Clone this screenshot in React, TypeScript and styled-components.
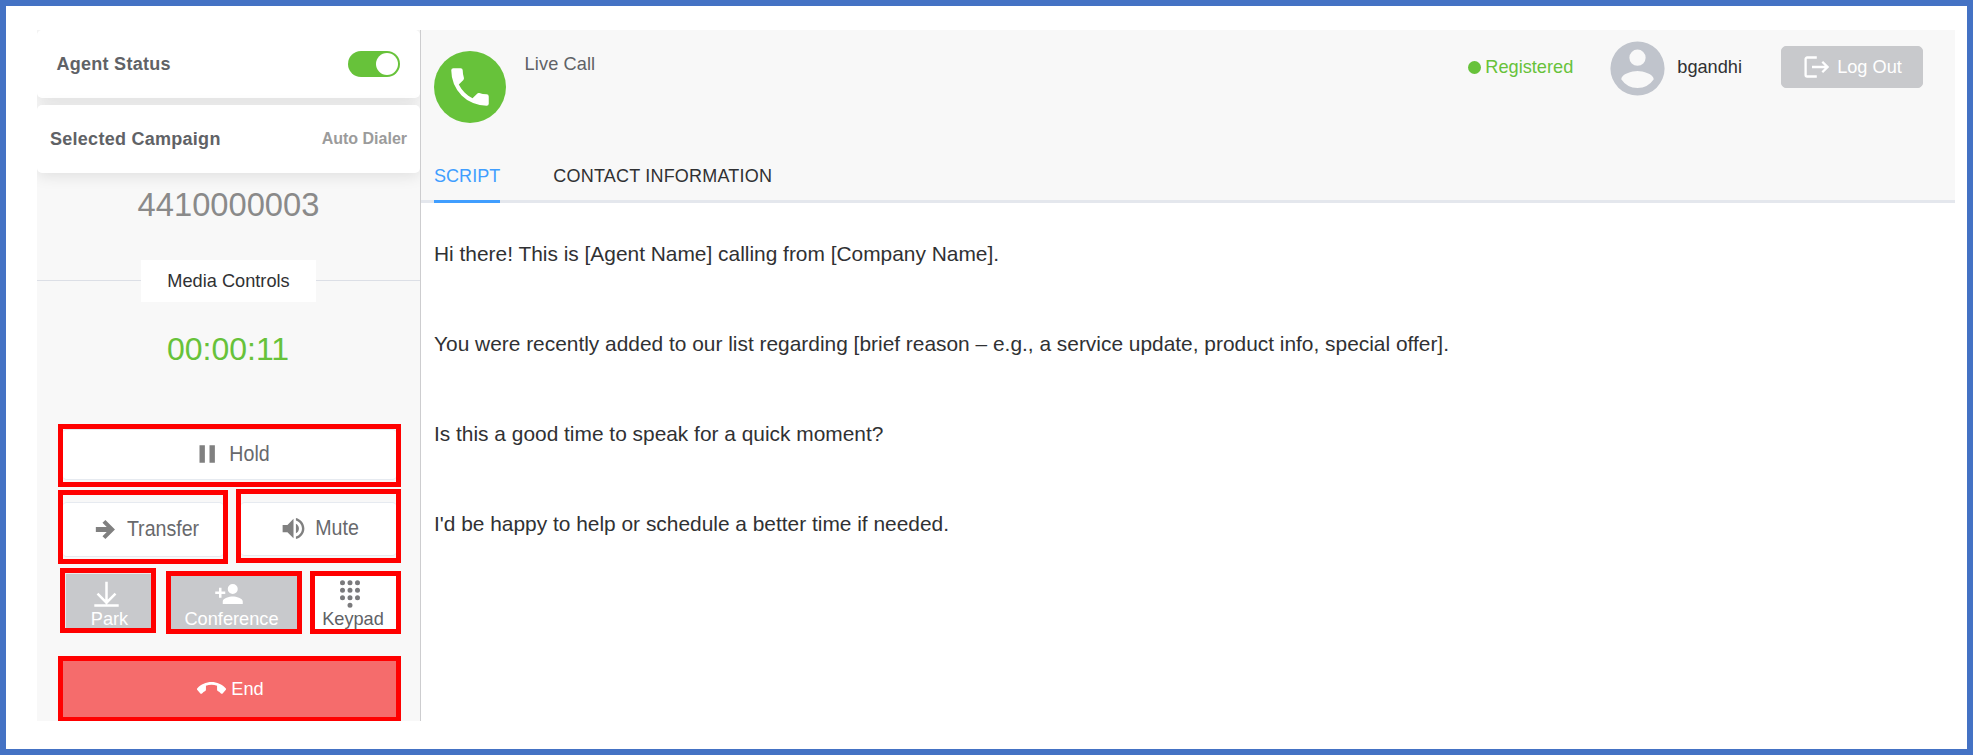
import React from "react";
import styled, { createGlobalStyle } from "styled-components";

const GlobalStyle = createGlobalStyle`
  * { box-sizing: border-box; }
  body { margin: 0; background: #fff; font-family: "Liberation Sans", Arial, Helvetica, sans-serif; font-size: 18.2px; color: #303133; }
  p { margin: 0; }
  button { font: inherit; padding: 0; margin: 0; }
  svg { display: block; flex: none; fill: currentColor; }
`;

const Frame = styled.div`
  width: 1973px;
  height: 755px;
  border: 6px solid #4472c4;
  padding: 24px 12px 28px 31px;
  display: flex;
  overflow: hidden;
`;

const Sidebar = styled.aside`
  width: 384px;
  height: 691px;
  background: #f8f8f8;
  border-right: 1px solid #cdcdcf;
  display: flex;
  flex-direction: column;
  flex: none;
  overflow: hidden;
`;

const Card = styled.section<{ $inset: string }>`
  height: 68px;
  margin-bottom: 7px;
  padding: ${(p) => p.$inset};
  display: flex;
  align-items: center;
  justify-content: space-between;
  background: #fff;
  border-radius: 5px;
  box-shadow: 0 3px 15px rgba(0, 0, 0, 0.1);
  flex: none;
`;

const CardTitle = styled.h2`
  margin: 0;
  font-size: 18px;
  line-height: 22px;
  letter-spacing: 0.27px;
  color: #606266;
`;

const Campaign = styled.span`
  font-size: 16px;
  font-weight: bold;
  color: #9b9b9b;
`;

const Toggle = styled.button`
  width: 52px;
  height: 26px;
  padding: 2px;
  border: 0;
  border-radius: 13px;
  background: #67c23a;
  display: flex;
  justify-content: flex-end;
  align-items: center;
`;

const Knob = styled.span`
  width: 22px;
  height: 22px;
  border-radius: 50%;
  background: #fff;
`;

const PhoneNumber = styled.div`
  margin-top: 6px;
  height: 38px;
  font-size: 32.7px;
  line-height: 38px;
  text-align: center;
  color: #8a8a8a;
`;

const Divider = styled.div`
  margin-top: 36px;
  height: 42px;
  display: flex;
  align-items: center;
  &::before, &::after { content: ""; height: 1px; flex: 1; margin-bottom: 1px; background: #dcdfe6; }
`;

const DividerLabel = styled.span`
  width: 175px;
  line-height: 42px;
  text-align: center;
  background: #fff;
`;

const Timer = styled.div`
  margin-top: 28px;
  height: 38px;
  font-size: 32px;
  line-height: 38px;
  padding-right: 1px;
  text-align: center;
  color: #67c23a;
`;

const Controls = styled.div`
  margin: 56px 19px 0 21px;
  display: flex;
  flex-direction: column;
`;

const ControlRow = styled.div<{ $top?: number; $left?: number }>`
  display: flex;
  align-items: flex-start;
  margin: ${(p) => p.$top ?? 0}px 0 0 ${(p) => p.$left ?? 0}px;
`;

const Control = styled.button<{ $w: number; $h: number; $drop?: number; $lead?: number; $pad?: string }>`
  width: ${(p) => p.$w}px;
  height: ${(p) => p.$h}px;
  margin: ${(p) => p.$drop ?? 0}px 0 0 ${(p) => p.$lead ?? 0}px;
  padding: ${(p) => p.$pad ?? "0"};
  border: 5px solid #f00;
  background: #f8f8f8;
  display: flex;
  flex: none;
`;

const Face = styled.span<{ $shift: number }>`
  flex: 1;
  align-self: stretch;
  display: flex;
  align-items: center;
  justify-content: center;
  gap: 7px;
  padding: 0 0 1px ${(p) => p.$shift}px;
  background: #fff;
  border: solid #e6eaf0;
  border-width: 1px 0;
  border-radius: 4px;
  font-size: 19.6px;
  color: #808080;
`;

const TallLabel = styled.span`
  color: #68696c;
  line-height: 24px;
  margin-bottom: 3px;
  transform: scaleY(1.1);
`;

const Tile = styled.span<{ $tone: "muted" | "plain"; $top: number; $edge?: boolean }>`
  flex: 1;
  align-self: stretch;
  display: flex;
  flex-direction: column;
  align-items: center;
  padding-top: ${(p) => p.$top}px;
  background: ${(p) => (p.$tone === "muted" ? "#c8c9cc" : "#fff")};
  color: ${(p) => (p.$tone === "muted" ? "#fff" : "#7a7a7c")};
  box-shadow: ${(p) => (p.$edge ? "inset 1px 1px #e9eaec" : "none")};
`;

const TileGlyph = styled.span<{ $right: number }>`
  padding-right: ${(p) => p.$right}px;
`;

const TileLabel = styled.span<{ $dark?: boolean; $left?: number; $right?: number }>`
  padding: 0 ${(p) => p.$right ?? 0}px 0 ${(p) => p.$left ?? 0}px;
  line-height: 20px;
  color: ${(p) => (p.$dark ? "#606266" : "#fff")};
`;

const EndFace = styled.span`
  flex: 1;
  align-self: stretch;
  display: flex;
  align-items: center;
  justify-content: center;
  gap: 5px;
  padding: 1px 0 0 2px;
  background: #f56c6c;
  color: #fff;
  svg { margin-bottom: 3px; }
`;

const Main = styled.main`
  flex: 1;
  min-width: 0;
`;

const Header = styled.header`
  height: 115px;
  padding: 0 32px 0 13px;
  background: #f8f8f8;
  display: flex;
  align-items: flex-start;
`;

const CallBadge = styled.div`
  width: 72px;
  height: 72px;
  margin-top: 21px;
  border-radius: 50%;
  background: #67c23a;
  color: #fff;
  display: flex;
  align-items: center;
  justify-content: center;
`;

const CallState = styled.span`
  margin: 23px auto 0 18.6px;
  line-height: 22px;
  letter-spacing: 0.1px;
  color: #606266;
`;

const Registered = styled.span`
  margin-top: 26px;
  display: flex;
  align-items: center;
  gap: 4px;
  line-height: 22px;
  color: #67c23a;
  &::before { content: ""; width: 13px; height: 13px; border-radius: 50%; background: currentColor; }
`;

const User = styled.span`
  margin: 6px 0 0 32px;
  display: flex;
  line-height: 62px;
  gap: 7px;
  svg { color: #c0c4cc; }
`;

const LogOut = styled.button`
  width: 142px;
  height: 42px;
  margin: 16px 0 0 39px;
  border: 1px solid #c8c9cc;
  border-radius: 5px;
  background: #c8c9cc;
  color: #fff;
  display: flex;
  align-items: center;
  justify-content: center;
  gap: 8px;
  padding-left: 2px;
`;

const Tabs = styled.nav`
  height: 58px;
  padding-left: 13px;
  display: flex;
  gap: 53px;
  background: #f8f8f8;
  box-shadow: inset 0 -3px #e4e7ed;
`;

const Tab = styled.a<{ $active?: boolean }>`
  font-size: 18px;
  line-height: 63px;
  letter-spacing: ${(p) => (p.$active ? 0.05 : 0.2)}px;
  color: ${(p) => (p.$active ? "#409eff" : "#303133")};
  box-shadow: ${(p) => (p.$active ? "inset 0 -3px #409eff" : "none")};
`;

const Script = styled.article`
  padding: 39px 0 0 13px;
  font-size: 20.9px;
  line-height: 24px;
  display: flex;
  flex-direction: column;
  gap: 66px;
`;

const Icon = ({ d, size }: { d: string; size: number }) => (
  <svg width={size} height={size} viewBox="0 0 24 24"><path d={d} /></svg>
);

const icons = {
  pause: "M14 19h4.3V5H14zM6 19h4.3V5H6z",
  arrow: "M4 10v4h9l-3.5 3.5 2.42 2.42L19.84 12l-7.92-7.92L9.5 6.5 13 10z",
  volume: "M14 3.23v2.06c2.89.86 5 3.54 5 6.71s-2.11 5.84-5 6.7v2.07c4-.91 7-4.49 7-8.77s-3-7.86-7-8.77M16.5 12c0-1.77-1-3.29-2.5-4.03V16c1.5-.71 2.5-2.24 2.5-4M3 9v6h4l5 5V4L7 9z",
  userPlus: "M15 14c-2.67 0-8 1.33-8 4v2h16v-2c0-2.67-5.33-4-8-4M6 10V7H4v3H1v2h3v3h2v-3h3v-2m6 2a4 4 0 1 0 0-8 4 4 0 0 0 0 8z",
  dialpad: "M12 19a2 2 0 1 0 0 4 2 2 0 0 0 0-4M6 1a2 2 0 1 0 0 4 2 2 0 0 0 0-4m0 6a2 2 0 1 0 0 4 2 2 0 0 0 0-4m0 6a2 2 0 1 0 0 4 2 2 0 0 0 0-4m12-8a2 2 0 1 0 0-4 2 2 0 0 0 0 4m-6 8a2 2 0 1 0 0 4 2 2 0 0 0 0-4m6 0a2 2 0 1 0 0 4 2 2 0 0 0 0-4m0-6a2 2 0 1 0 0 4 2 2 0 0 0 0-4m-6 0a2 2 0 1 0 0 4 2 2 0 0 0 0-4m0-6a2 2 0 1 0 0 4 2 2 0 0 0 0-4z",
  phone: "M6.62 10.79c1.44 2.83 3.76 5.15 6.59 6.59l2.2-2.2c.28-.28.67-.36 1.02-.25 1.12.37 2.32.57 3.57.57a1 1 0 0 1 1 1V20a1 1 0 0 1-1 1A17 17 0 0 1 3 4a1 1 0 0 1 1-1h3.5a1 1 0 0 1 1 1c0 1.25.2 2.45.57 3.57.11.35.03.74-.25 1.02z",
};

export default function App() {
  return (
    <>
      <GlobalStyle />
      <Frame>
        <Sidebar>
          <Card $inset="0 20px 0 19.5px">
            <CardTitle>Agent Status</CardTitle>
            <Toggle aria-label="Agent status"><Knob /></Toggle>
          </Card>
          <Card $inset="0 13px">
            <CardTitle>Selected Campaign</CardTitle>
            <Campaign>Auto Dialer</Campaign>
          </Card>
          <PhoneNumber>4410000003</PhoneNumber>
          <Divider><DividerLabel>Media Controls</DividerLabel></Divider>
          <Timer>00:00:11</Timer>
          <Controls>
            <ControlRow>
              <Control $w={343} $h={63} $pad="0 0 2px">
                <Face $shift={3}>
                  <Icon d={icons.pause} size={30} />
                  <TallLabel>Hold</TallLabel>
                </Face>
              </Control>
            </ControlRow>
            <ControlRow $top={2}>
              <Control $w={170} $h={74} $drop={1} $pad="7px 0 2px">
                <Face $shift={4}>
                  <Icon d={icons.arrow} size={29} />
                  <TallLabel>Transfer</TallLabel>
                </Face>
              </Control>
              <Control $w={165} $h={74} $lead={8} $pad="8px 0 2px">
                <Face $shift={1}>
                  <Icon d={icons.volume} size={29} />
                  <TallLabel>Mute</TallLabel>
                </Face>
              </Control>
            </ControlRow>
            <ControlRow $top={4} $left={2}>
              <Control $w={96} $h={65}>
                <Tile $tone="muted" $top={0} $edge>
                  <TileGlyph $right={3}>
                    <svg width="25" height="36" viewBox="0 0 25 36">
                      <path d="M12.5 8.7v22M3.5 20.7l9 9 9-9M0.3 32.4h24.4" fill="none" stroke="currentColor" strokeWidth="2.5" />
                    </svg>
                  </TileGlyph>
                  <TileLabel $left={3}>Park</TileLabel>
                </Tile>
              </Control>
              <Control $w={136} $h={63} $drop={3} $lead={10}>
                <Tile $tone="muted" $top={3}>
                  <TileGlyph $right={10}><Icon d={icons.userPlus} size={30} /></TileGlyph>
                  <TileLabel $right={5}>Conference</TileLabel>
                </Tile>
              </Control>
              <Control $w={91} $h={63} $drop={3} $lead={8}>
                <Tile $tone="plain" $top={3}>
                  <TileGlyph $right={12}><Icon d={icons.dialpad} size={30} /></TileGlyph>
                  <TileLabel $dark $right={5}>Keypad</TileLabel>
                </Tile>
              </Control>
            </ControlRow>
            <ControlRow $top={22}>
              <Control $w={343} $h={66}>
                <EndFace>
                  <svg width="29" height="12" viewBox="0 7 24 9" preserveAspectRatio="none">
                    <path d="M12 9c-1.6 0-3.15.25-4.6.72v3.1c0 .4-.23.74-.56.9-.98.49-1.87 1.12-2.67 1.85-.17.18-.42.29-.67.29-.3 0-.55-.12-.73-.3L.29 13.08a1 1 0 0 1 0-1.41C3.34 8.77 7.46 7 12 7s8.66 1.77 11.71 4.67a1 1 0 0 1 0 1.41l-2.48 2.48c-.18.18-.43.3-.73.3-.25 0-.5-.11-.68-.29-.79-.73-1.68-1.36-2.66-1.85-.33-.16-.56-.5-.56-.9v-3.1C15.15 9.25 13.6 9 12 9z" />
                  </svg>
                  End
                </EndFace>
              </Control>
            </ControlRow>
          </Controls>
        </Sidebar>
        <Main>
          <Header>
            <CallBadge><Icon d={icons.phone} size={50} /></CallBadge>
            <CallState>Live Call</CallState>
            <Registered>Registered</Registered>
            <User>
              <svg width="65" height="65" viewBox="0 0 24 24">
                <path d="M12 2a10 10 0 1 0 0 20 10 10 0 0 0 0-20m0 3a3 3 0 1 1 0 6 3 3 0 0 1 0-6m0 14.2a7.2 7.2 0 0 1-6-3.22c.03-1.99 4-3.08 6-3.08 1.99 0 5.97 1.09 6 3.08a7.2 7.2 0 0 1-6 3.22" />
              </svg>
              bgandhi
            </User>
            <LogOut>
              <svg width="25" height="22" viewBox="0 0 25 22">
                <path d="M12.8 1.5H3.1a1.5 1.5 0 0 0-1.5 1.5v16a1.5 1.5 0 0 0 1.5 1.5h9.7M8 11h15.5M18.3 5.8l5.2 5.2-5.2 5.2" fill="none" stroke="currentColor" strokeWidth="2.3" />
              </svg>
              Log Out
            </LogOut>
          </Header>
          <Tabs>
            <Tab $active>SCRIPT</Tab>
            <Tab>CONTACT INFORMATION</Tab>
          </Tabs>
          <Script>
            <p>Hi there! This is [Agent Name] calling from [Company Name].</p>
            <p>You were recently added to our list regarding [brief reason – e.g., a service update, product info, special offer].</p>
            <p>Is this a good time to speak for a quick moment?</p>
            <p>I'd be happy to help or schedule a better time if needed.</p>
          </Script>
        </Main>
      </Frame>
    </>
  );
}
